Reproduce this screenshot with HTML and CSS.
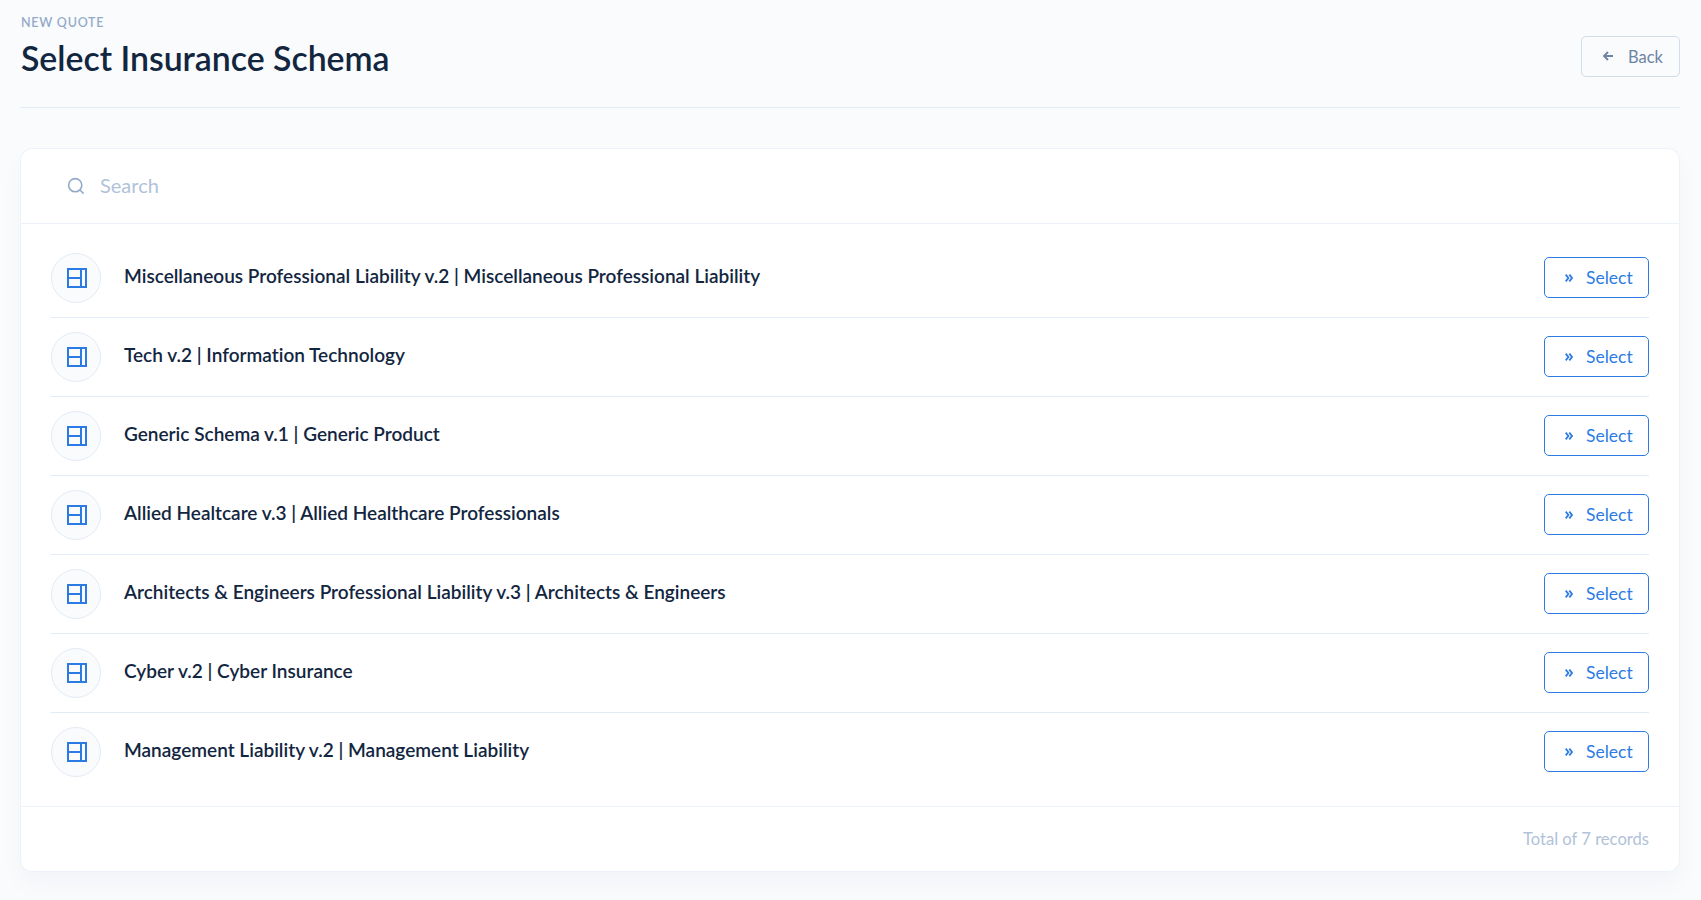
FILE: index.html
```html
<!DOCTYPE html>
<html lang="en">
<head>
<meta charset="utf-8">
<title>Select Insurance Schema</title>
<link rel="stylesheet" href="styles.css">
</head>
<body>
<header class="page-header">
  <div class="heading">
    <div class="pretitle">NEW QUOTE</div>
    <h1 class="title">Select Insurance Schema</h1>
  </div>
  <a class="btn btn-back">
    <svg class="ico-arrow" viewBox="0 0 14 14" width="14" height="14"><path d="M12 7H3M7 3L3 7l4 4" fill="none" stroke="currentColor" stroke-width="1.9"/></svg>
    <span>Back</span>
  </a>
</header>
<main class="card">
  <div class="search">
    <svg class="ico-search" viewBox="0 0 18 18" width="18" height="18"><circle cx="8.2" cy="8.2" r="6.6" fill="none" stroke="currentColor" stroke-width="1.6"/><path d="M13 13l3.6 3.6" fill="none" stroke="currentColor" stroke-width="1.6"/></svg>
    <span class="search-ph">Search</span>
  </div>
  <div class="list">
    <div class="row">
      <span class="avatar"><svg viewBox="0 0 20 20" width="20" height="20"><path d="M1 1h18v18H1zM14 1v18M1 10h13" fill="none" stroke="currentColor" stroke-width="2"/></svg></span>
      <span class="name">Miscellaneous Professional Liability v.2 | Miscellaneous Professional Liability</span>
      <a class="btn btn-select"><svg class="chev" viewBox="0 0 8 8" width="8" height="8"><path d="M.7.6L3.4 4 .7 7.4M4.3.6L7 4 4.3 7.4" fill="none" stroke="currentColor" stroke-width="1.8"/></svg><span>Select</span></a>
    </div>
    <div class="row">
      <span class="avatar"><svg viewBox="0 0 20 20" width="20" height="20"><path d="M1 1h18v18H1zM14 1v18M1 10h13" fill="none" stroke="currentColor" stroke-width="2"/></svg></span>
      <span class="name">Tech v.2 | Information Technology</span>
      <a class="btn btn-select"><svg class="chev" viewBox="0 0 8 8" width="8" height="8"><path d="M.7.6L3.4 4 .7 7.4M4.3.6L7 4 4.3 7.4" fill="none" stroke="currentColor" stroke-width="1.8"/></svg><span>Select</span></a>
    </div>
    <div class="row">
      <span class="avatar"><svg viewBox="0 0 20 20" width="20" height="20"><path d="M1 1h18v18H1zM14 1v18M1 10h13" fill="none" stroke="currentColor" stroke-width="2"/></svg></span>
      <span class="name">Generic Schema v.1 | Generic Product</span>
      <a class="btn btn-select"><svg class="chev" viewBox="0 0 8 8" width="8" height="8"><path d="M.7.6L3.4 4 .7 7.4M4.3.6L7 4 4.3 7.4" fill="none" stroke="currentColor" stroke-width="1.8"/></svg><span>Select</span></a>
    </div>
    <div class="row">
      <span class="avatar"><svg viewBox="0 0 20 20" width="20" height="20"><path d="M1 1h18v18H1zM14 1v18M1 10h13" fill="none" stroke="currentColor" stroke-width="2"/></svg></span>
      <span class="name">Allied Healtcare v.3 | Allied Healthcare Professionals</span>
      <a class="btn btn-select"><svg class="chev" viewBox="0 0 8 8" width="8" height="8"><path d="M.7.6L3.4 4 .7 7.4M4.3.6L7 4 4.3 7.4" fill="none" stroke="currentColor" stroke-width="1.8"/></svg><span>Select</span></a>
    </div>
    <div class="row">
      <span class="avatar"><svg viewBox="0 0 20 20" width="20" height="20"><path d="M1 1h18v18H1zM14 1v18M1 10h13" fill="none" stroke="currentColor" stroke-width="2"/></svg></span>
      <span class="name">Architects &amp; Engineers Professional Liability v.3 | Architects &amp; Engineers</span>
      <a class="btn btn-select"><svg class="chev" viewBox="0 0 8 8" width="8" height="8"><path d="M.7.6L3.4 4 .7 7.4M4.3.6L7 4 4.3 7.4" fill="none" stroke="currentColor" stroke-width="1.8"/></svg><span>Select</span></a>
    </div>
    <div class="row">
      <span class="avatar"><svg viewBox="0 0 20 20" width="20" height="20"><path d="M1 1h18v18H1zM14 1v18M1 10h13" fill="none" stroke="currentColor" stroke-width="2"/></svg></span>
      <span class="name">Cyber v.2 | Cyber Insurance</span>
      <a class="btn btn-select"><svg class="chev" viewBox="0 0 8 8" width="8" height="8"><path d="M.7.6L3.4 4 .7 7.4M4.3.6L7 4 4.3 7.4" fill="none" stroke="currentColor" stroke-width="1.8"/></svg><span>Select</span></a>
    </div>
    <div class="row">
      <span class="avatar"><svg viewBox="0 0 20 20" width="20" height="20"><path d="M1 1h18v18H1zM14 1v18M1 10h13" fill="none" stroke="currentColor" stroke-width="2"/></svg></span>
      <span class="name">Management Liability v.2 | Management Liability</span>
      <a class="btn btn-select"><svg class="chev" viewBox="0 0 8 8" width="8" height="8"><path d="M.7.6L3.4 4 .7 7.4M4.3.6L7 4 4.3 7.4" fill="none" stroke="currentColor" stroke-width="1.8"/></svg><span>Select</span></a>
    </div>
  </div>
  <footer class="card-foot">Total of 7 records</footer>
</main>
</body>
</html>
```
FILE: styles.css
```css
* { box-sizing: border-box; }
html, body { margin: 0; height: 100%; }
body {
  background: #f9fbfd;
  color: #12263f;
  font-family: "Lato", "Liberation Sans", sans-serif;
  font-variant-ligatures: none;
  padding: 0 21px 0 20px;
  overflow: hidden;
}
.page-header {
  height: 108px;
  display: flex;
  justify-content: space-between;
  align-items: flex-start;
  border-bottom: 1px solid #e3ebf6;
  margin-bottom: 40px;
}
.heading { padding-left: 1px; }
.pretitle {
  margin-top: 15px;
  font-size: 12.5px;
  line-height: 15px;
  letter-spacing: 0.75px;
  font-weight: 600;
  color: #95aac9;
}
.title {
  margin: 9px 0 0;
  font-size: 33.8px;
  line-height: 38px;
  font-weight: 600;
  color: #12263f;
}
.btn {
  display: flex;
  align-items: center;
  height: 41px;
  border-radius: 5px;
  border: 1px solid;
}
.btn-back {
  margin-top: 36px;
  width: 99px;
  padding-left: 19px;
  font-size: 16.5px;
  color: #6e84a3;
  border-color: #d2ddec;
  gap: 13px;
}
.ico-arrow { margin-bottom: 2px; }
.card {
  background: #fff;
  border: 1px solid #edf2f9;
  border-radius: 12px;
  box-shadow: 0 12px 24px rgba(18, 38, 63, 0.03);
  height: 724px;
}
.search {
  height: 75px;
  display: flex;
  align-items: center;
  padding-left: 46px;
  gap: 15px;
  border-bottom: 1px solid #edf2f9;
  color: #95aac9;
}
.ico-search { display: block; }
.search-ph { font-size: 20px; line-height: 24px; margin-bottom: 2px; color: #b1c2d9; }
.list {
  padding: 15px 30px;
  border-bottom: 1px solid #edf2f9;
}
.row {
  display: flex;
  align-items: center;
  height: 79px;
  border-bottom: 1px solid #e3ebf6;
}
.row:last-child { height: 78px; border-bottom: 0; }
.avatar {
  width: 50px;
  height: 50px;
  border-radius: 50%;
  background: #f9fbfd;
  border: 1px solid #e3ebf6;
  display: flex;
  align-items: center;
  justify-content: center;
  padding-left: 1px;
  color: #2c7be5;
  flex: none;
}
.avatar svg { display: block; }
.name {
  flex: 1;
  margin-left: 23px;
  margin-top: -6px;
  font-size: 19.03px;
  font-weight: 600;
  color: #12263f;
}
.btn-select {
  width: 105px;
  padding-left: 20px;
  margin-bottom: 1px;
  font-size: 17.5px;
  color: #2c7be5;
  border-color: #2c7be5;
  gap: 13px;
  flex: none;
}
.chev { display: block; }
.card-foot {
  text-align: right;
  padding: 22px 30px 0;
  font-size: 16.6px;
  line-height: 20px;
  color: #b1c2d9;
}
```
